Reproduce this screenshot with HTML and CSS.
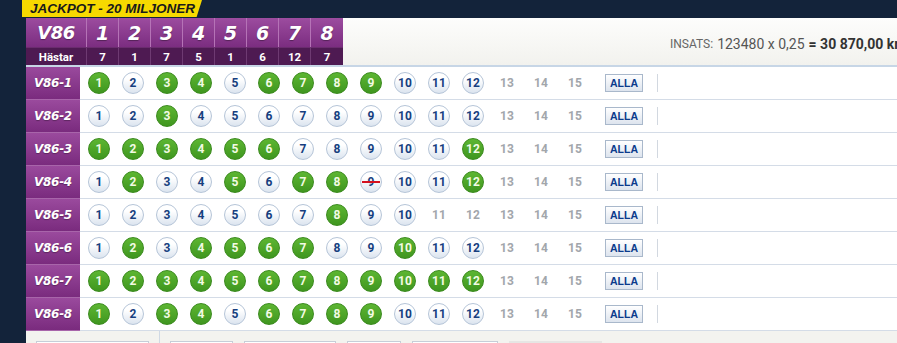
FILE: index.html
```html
<!DOCTYPE html>
<html lang="sv">
<head>
  <meta charset="UTF-8">
  <meta name="viewport" content="width=device-width, initial-scale=1.0">
  <title>V86</title>
  <link rel="stylesheet" href="styles.css">
</head>
<body>
  <div class="topbar">
    <div class="jackpot">JACKPOT - 20 MILJONER</div>
  </div>
  <div class="page">
    <div class="header">
      <div class="legs">
        <div class="leg-title">V86</div>
        <div class="leg-num">1</div>
        <div class="leg-num">2</div>
        <div class="leg-num">3</div>
        <div class="leg-num">4</div>
        <div class="leg-num">5</div>
        <div class="leg-num">6</div>
        <div class="leg-num">7</div>
        <div class="leg-num">8</div>
        <div class="leg-sub">Hästar</div>
        <div class="leg-count">7</div>
        <div class="leg-count">1</div>
        <div class="leg-count">7</div>
        <div class="leg-count">5</div>
        <div class="leg-count">1</div>
        <div class="leg-count">6</div>
        <div class="leg-count">12</div>
        <div class="leg-count">7</div>
      </div>
      <div class="insats">
        <span class="insats-label">INSATS:</span>
        <span>123480 x 0,25</span>
        <b>= 30 870,00 kr</b>
      </div>
    </div>

    <div class="rows" id="rows"></div>

    <div class="footer">
      <div class="footer-side">
        <div class="fbtn w113"></div>
      </div>
      <div class="footer-main">
        <div class="fbtn w63"></div>
        <div class="fbtn w92"></div>
        <div class="fbtn w54"></div>
        <div class="fbtn w86"></div>
        <div class="fbtn w93 filled"></div>
      </div>
    </div>
  </div>

  <script>
  const legs = [
    { horses: 12, picked: [1, 3, 4, 6, 7, 8, 9] },
    { horses: 12, picked: [3] },
    { horses: 12, picked: [1, 2, 3, 4, 5, 6, 12] },
    { horses: 12, picked: [2, 5, 7, 8, 12], scratched: [9] },
    { horses: 10, picked: [8] },
    { horses: 12, picked: [2, 4, 5, 6, 7, 10] },
    { horses: 12, picked: [1, 2, 3, 4, 5, 6, 7, 8, 9, 10, 11, 12] },
    { horses: 12, picked: [1, 3, 4, 6, 7, 8, 9] }
  ];

  const rows = document.getElementById('rows');

  legs.forEach((leg, i) => {
    const row = document.createElement('div');
    row.classList.add('row');

    const label = document.createElement('div');
    label.classList.add('row-label');
    label.textContent = 'V86-' + (i + 1);
    row.appendChild(label);

    const balls = document.createElement('div');
    balls.classList.add('balls');

    for (let n = 1; n <= 15; n++) {
      const ball = document.createElement('div');
      ball.classList.add('ball');
      if (n > leg.horses) {
        ball.classList.add('empty');
      } else if (leg.picked.includes(n)) {
        ball.classList.add('picked');
      }
      if (leg.scratched && leg.scratched.includes(n)) {
        ball.classList.add('scratched');
      }
      ball.textContent = n;
      balls.appendChild(ball);
    }

    const all = document.createElement('button');
    all.classList.add('alla');
    all.textContent = 'ALLA';
    balls.appendChild(all);

    const sep = document.createElement('div');
    sep.classList.add('sep');
    balls.appendChild(sep);

    row.appendChild(balls);
    rows.appendChild(row);
  });
  </script>
</body>
</html>
```

FILE: styles.css
```css
body {
  margin: 0;
  background-color: #13233a;
  font-family: Roboto, "Liberation Sans", Arial, sans-serif;
  overflow: hidden;
  height: 343px;
}

.topbar {
  height: 18px;
  padding-left: 22px;
}

.jackpot {
  width: 172px;
  height: 17px;
  padding-left: 8px;
  background-color: #f7d900;
  color: #1a1a1a;
  font-family: "Liberation Sans", Arial, sans-serif;
  font-weight: bold;
  font-style: italic;
  font-size: 13.5px;
  line-height: 17px;
  white-space: nowrap;
  clip-path: polygon(0 0, 100% 0, 97% 100%, 0 100%);
}

.page {
  margin-left: 26px;
  background-color: #fff;
  height: 325px;
  overflow: hidden;
}

.header {
  display: flex;
  height: 47px;
  border-bottom: 2px solid #c7d6e6;
  background: linear-gradient(to bottom, #fdfdfc, #f2f2ee);
}

.legs {
  display: grid;
  grid-template-columns: 61px repeat(8, 32px);
  grid-template-rows: 29px 18px;
  color: #fff;
}

.leg-title,
.leg-num {
  background: linear-gradient(to bottom, #9c4c9f, #7b2d80);
  border-right: 1px solid #b573b6;
  display: flex;
  align-items: center;
  justify-content: center;
  font-family: "DejaVu Sans", Verdana, sans-serif;
  font-weight: bold;
  font-style: italic;
  text-shadow: 0 1px 1px rgba(0, 0, 0, 0.35);
}

.leg-title {
  font-size: 18px;
  letter-spacing: -0.5px;
}

.leg-num {
  font-size: 19px;
}

.leg-num:nth-child(9) {
  border-right: none;
}

.leg-sub,
.leg-count {
  background-color: #4e1a52;
  border-right: 1px solid #6e3a72;
  border-top: 1px solid #6a2c6e;
  display: flex;
  align-items: center;
  justify-content: center;
  font-size: 11.5px;
  font-weight: bold;
}

.legs .leg-count:last-child {
  border-right: none;
}

.insats {
  margin-left: 327px;
  padding-top: 4px;
  display: flex;
  align-items: center;
  gap: 4px;
  white-space: nowrap;
  color: #555;
  font-size: 14px;
}

.insats-label {
  font-size: 12px;
  color: #666;
}

.insats b {
  color: #333;
}

.row {
  display: flex;
  height: 32px;
  border-bottom: 1px solid #d4dce7;
}

.row-label {
  width: 54px;
  background: linear-gradient(to bottom, #9a4a9d, #7a2b7e);
  border-bottom: 1px solid #a865aa;
  margin-bottom: -1px;
  color: #fff;
  display: flex;
  align-items: center;
  justify-content: center;
  font-family: "DejaVu Sans", Verdana, sans-serif;
  font-weight: bold;
  font-style: italic;
  font-size: 12px;
  letter-spacing: -0.3px;
  text-shadow: 0 1px 1px rgba(0, 0, 0, 0.3);
}

.balls {
  display: flex;
  align-items: center;
  gap: 12px;
  padding-left: 8px;
}

.ball {
  position: relative;
  width: 22px;
  height: 22px;
  box-sizing: border-box;
  border-radius: 50%;
  border: 1px solid #b6c5d8;
  background: linear-gradient(to bottom, #ffffff 30%, #dbe4ef);
  color: #173f7f;
  display: flex;
  align-items: center;
  justify-content: center;
  font-size: 12px;
  font-weight: bold;
}

.ball.picked {
  border-color: #3a8a1d;
  background: linear-gradient(to bottom, #5db632, #3f961f);
  color: #f3fbe4;
}

.ball.empty {
  border-color: transparent;
  background: none;
  color: #a2a6ab;
}

.ball.scratched::after {
  content: "";
  position: absolute;
  left: 1px;
  right: 1px;
  top: 9px;
  height: 2px;
  background-color: #d4101e;
}

.alla {
  margin-left: 7px;
  width: 38px;
  height: 18px;
  padding: 0;
  border: 1px solid #a9b8cb;
  background: linear-gradient(to bottom, #ffffff, #dde4ee);
  color: #0b3b8c;
  font-family: "Liberation Sans", Arial, sans-serif;
  font-size: 10.5px;
  font-weight: bold;
}

.sep {
  margin-left: 2px;
  width: 1px;
  height: 18px;
  background-color: #d2d8e0;
}

.footer {
  display: flex;
  height: 12px;
  overflow: hidden;
  background-color: #f3f3ef;
}

.footer-side {
  width: 123px;
  padding: 10px 0 0 10px;
  border-right: 1px solid #d0d9e4;
}

.footer-main {
  display: flex;
  gap: 11px;
  padding: 10px 0 0 10px;
}

.fbtn {
  height: 20px;
  box-sizing: border-box;
  border: 1px solid #c6ced8;
  background-color: #fff;
}

.fbtn.filled {
  background-color: #e6e6e4;
  border-color: #e6e6e4;
}

.w113 { width: 113px; }
.w63 { width: 63px; }
.w92 { width: 92px; }
.w54 { width: 54px; }
.w86 { width: 86px; }
.w93 { width: 93px; }
```
